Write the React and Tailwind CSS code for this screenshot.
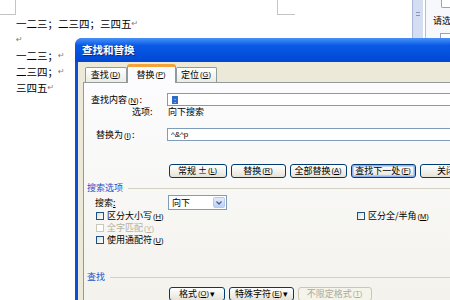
import React from 'react';

// mnemonic like (N) with underlined letter
function Key({ k }) {
  return (
    <span className="text-[7.5px] font-['Liberation_Sans',sans-serif] mx-[1px]">
      (<span className="underline">{k}</span>)
    </span>
  );
}

function Br() {
  return <span className="font-['DejaVu_Sans',sans-serif] text-[8px] text-[#7d7d7d] align-top">↵</span>;
}

function Tab({ active, w, children }) {
  if (active) {
    return (
      <div
        className={`relative z-10 -mb-px h-[19px] ${w} rounded-t-[3px] border-x border-t-[3px] border-x-[#919b9c] border-t-[#f3a33a] bg-[#fcfcfe] flex items-center justify-center text-[9px]`}
      >
        {children}
      </div>
    );
  }
  return (
    <div
      className={`h-[15px] ${w} rounded-t-[2px] border-x border-t border-[#919b9c] bg-gradient-to-b from-white to-[#ecebe5] flex items-center justify-center text-[9px]`}
    >
      {children}
    </div>
  );
}

function Btn({ w, focus, disabled, children }) {
  return (
    <div
      className={`${w} h-full shrink-0 rounded-[3px] border flex items-center justify-center text-[9px] whitespace-nowrap ${
        disabled
          ? 'border-[#c9c7ba] bg-[#f5f4ea] text-[#aca899]'
          : 'border-[#003c74] bg-gradient-to-b from-white to-[#e5e3d8]'
      } ${focus ? 'shadow-[inset_0_0_0_1.5px_#8eb1ef]' : ''}`}
    >
      {children}
    </div>
  );
}

function Check({ disabled, children }) {
  return (
    <div className="flex items-center">
      <div
        className={`w-[8px] h-[8px] border ${
          disabled ? 'border-[#cac8bb] bg-white' : 'border-[#1c5180] bg-gradient-to-br from-[#dcdcd7] to-white'
        }`}
      />
      <span className={`ml-[3px] text-[9px] whitespace-nowrap ${disabled ? 'text-[#b5b2a2]' : ''}`}>{children}</span>
    </div>
  );
}

function Dialog() {
  return (
    <div className="absolute left-[75px] top-[38px] w-[400px] h-[270px] rounded-tl-[7px] overflow-hidden bg-[#0b4fd8] flex flex-col">
      {/* Title bar */}
      <div className="h-[24px] shrink-0 bg-gradient-to-b from-[#4792f7] via-[#0a5ae6] via-30% to-[#0047d2] flex items-center pl-[7px] text-white font-bold text-[10.5px] [text-shadow:1px_1px_0_#0b2a80]">
        查找和替换
      </div>

      <div className="flex-1 ml-[3px] bg-[#ece9d8] pl-[5px] pt-[2px] flex flex-col">
        {/* Tabs */}
        <div className="flex items-end h-[18px] pl-[2px]">
          <Tab w="w-[42px]">
            查找<Key k="D" />
          </Tab>
          <Tab active w="w-[49px]">
            替换<Key k="P" />
          </Tab>
          <Tab w="w-[41px]">
            定位<Key k="G" />
          </Tab>
        </div>

        {/* Panel */}
        <div className="flex-1 border border-[#919b9c] bg-gradient-to-b from-[#fcfcfe] to-[#f3f2ec] flex flex-col">
          {/* Find what */}
          <div className="mt-[10px] h-[13px] flex items-center">
            <div className="w-[83px] pl-[7px] text-[9px] whitespace-nowrap">
              查找内容<Key k="N" />:
            </div>
            <div className="w-[290px] h-full border border-[#7f9db9] bg-white flex items-center pl-[4px]">
              <span className="w-[6px] h-[8px] bg-[#316ac5] text-white text-[7px] leading-[8px] flex justify-center">:</span>
            </div>
          </div>

          {/* Options */}
          <div className="h-[12px] flex items-center text-[9px]">
            <div className="w-[84px] pl-[48px]">选项:</div>
            <div>向下搜索</div>
          </div>

          {/* Replace with */}
          <div className="mt-[10px] h-[13px] flex items-center">
            <div className="w-[83px] pl-[12px] text-[9px] whitespace-nowrap">
              替换为<Key k="I" />:
            </div>
            <div className="w-[290px] h-full border border-[#7f9db9] bg-white flex items-center pl-[3px] text-[8px] font-['Liberation_Sans',sans-serif]">
              ^&amp;^p
            </div>
          </div>

          {/* Main buttons */}
          <div className="mt-[23px] h-[14px] flex pl-[85px] gap-[4px]">
            <Btn w="w-[58px]">
              常规 ± <Key k="L" />
            </Btn>
            <Btn w="w-[55px]">
              替换<Key k="R" />
            </Btn>
            <Btn w="w-[57px]">
              全部替换<Key k="A" />
            </Btn>
            <Btn w="w-[65px]" focus>
              查找下一处<Key k="F" />
            </Btn>
            <Btn w="w-[52px]">关闭</Btn>
          </div>

          {/* Search options */}
          <div className="mt-[4px] h-[12px] flex items-center pl-[3px]">
            <span className="text-[9px] text-[#1d50c9]">搜索选项</span>
            <div className="flex-1 h-px bg-[#d5d2c3] ml-[5px]" />
          </div>

          <div className="mt-[1px] h-[15px] flex items-center">
            <div className="w-[84px] pl-[11px] text-[9px]">
              搜索<span className="underline">:</span>
            </div>
            <div className="w-[59px] h-full border border-[#7f9db9] bg-white flex items-center justify-between">
              <span className="pl-[3px] text-[9px]">向下</span>
              <div className="w-[12px] h-[11px] mr-[1px] rounded-[2px] border border-[#b7c8ee] bg-gradient-to-b from-[#e3ebfd] to-[#bcd0f7] flex items-center justify-center">
                <svg width="6" height="4" viewBox="0 0 6 4">
                  <path d="M0.5 0.5 L3 3 L5.5 0.5" fill="none" stroke="#4d6185" strokeWidth="1.3" />
                </svg>
              </div>
            </div>
          </div>

          <div className="h-[12px] flex items-center pl-[12px]">
            <div className="w-[261px]">
              <Check>
                区分大小写<Key k="H" />
              </Check>
            </div>
            <Check>
              区分全/半角<Key k="M" />
            </Check>
          </div>
          <div className="h-[12px] flex items-center pl-[12px]">
            <Check disabled>
              全字匹配<Key k="Y" />
            </Check>
          </div>
          <div className="h-[12px] flex items-center pl-[12px]">
            <Check>
              使用通配符<Key k="U" />
            </Check>
          </div>

          {/* Find section */}
          <div className="mt-[25px] h-[12px] flex items-center pl-[3px]">
            <span className="text-[9px] text-[#1d50c9]">查找</span>
            <div className="flex-1 h-px bg-[#d5d2c3] ml-[5px]" />
          </div>

          <div className="mt-[4px] h-[14px] flex pl-[85px] gap-[4px]">
            <Btn w="w-[56px]">
              格式<Key k="O" /> ▾
            </Btn>
            <Btn w="w-[65px]">
              特殊字符<Key k="E" /> ▾
            </Btn>
            <Btn w="w-[74px]" disabled>
              不限定格式<Key k="T" />
            </Btn>
          </div>
        </div>
      </div>
    </div>
  );
}

export default function App() {
  return (
    <div className="relative w-[450px] h-[300px] overflow-hidden bg-white text-black font-['Noto_Sans_CJK_SC','Noto_Sans',sans-serif]">
      <div className="flex h-full">
        {/* Word document page */}
        <div className="relative flex-1 bg-white">
          <div className="absolute left-0 top-0 w-[16px] h-[15px] border-r border-b border-[#c4c4c4]" />
          <div className="absolute left-[277px] top-0 w-[18px] h-[15px] border-l border-b border-[#c4c4c4]" />
          <div className="pt-[16px] pl-[16px] text-[10.5px] leading-[16px]">
            <p>
              一二三；二三四；三四五<Br />
            </p>
            <p>
              <Br />
            </p>
            <p>
              一二三；<Br />
            </p>
            <p>
              二三四；<Br />
            </p>
            <p>
              三四五<Br />
            </p>
          </div>
        </div>

        {/* split bar */}
        <div className="w-[11px] bg-[#d4ddf1] border-l border-[#a9b8d8] flex justify-center pt-[12px]">
          <div className="w-[4px] h-[4px] border-y border-[#8596bb]" />
        </div>
        <div className="w-[2px] bg-white" />

        {/* task pane */}
        <div className="w-[25px] border-l border-[#b2bdd6] bg-[#f7f8fc] flex flex-col items-end">
          <div className="w-[9px] h-[8px] rounded-bl-[2px] border-l border-b border-[#98a2b8] bg-white" />
          <div className="self-start pl-[7px] mt-[6px] text-[9px] whitespace-nowrap">请选</div>
          <div className="mt-[5px] w-[10px] h-[8px] border-l border-t border-[#98a2b8] bg-white" />
        </div>
      </div>

      <Dialog />
    </div>
  );
}
